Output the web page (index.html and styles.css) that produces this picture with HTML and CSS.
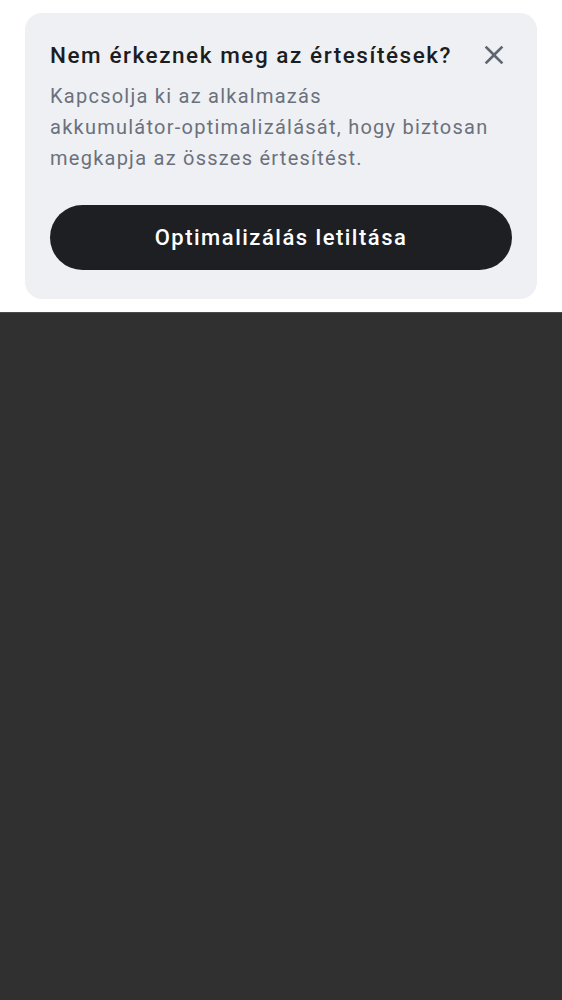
FILE: index.html
```html
<!DOCTYPE html>
<html lang="hu">
<head>
<meta charset="utf-8">
<title>Értesítések</title>
<link rel="stylesheet" href="styles.css">
</head>
<body>
<div class="top">
  <div class="card">
    <div class="card-head">
      <h1 class="card-title">Nem érkeznek meg az értesítések?</h1>
      <button class="close" aria-label="Bezárás">
        <svg viewBox="0 0 24 24" width="32" height="32"><path fill="currentColor" d="M19 6.41L17.59 5 12 10.59 6.41 5 5 6.41 10.59 12 5 17.59 6.41 19 12 13.41 17.59 19 19 17.59 13.41 12z"/></svg>
      </button>
    </div>
    <p class="card-text">Kapcsolja ki az alkalmazás<br>akkumulátor-optimalizálását, hogy biztosan megkapja az összes értesítést.</p>
    <button class="primary">Optimalizálás letiltása</button>
  </div>
</div>
<div class="dark"></div>
</body>
</html>
```
FILE: styles.css
```css
html, body {
  margin: 0;
  padding: 0;
  height: 100%;
}
body {
  font-family: Roboto, "Noto Sans", sans-serif;
  background: #303030;
  display: flex;
  flex-direction: column;
}
.top {
  background: #ffffff;
  padding: 13px 25px 0 25px;
  height: 299px;
}
.card {
  background: #eff0f4;
  border-radius: 17px;
  padding: 27px 25px 29px 25px;
  height: 286px;
  box-sizing: border-box;
  display: flex;
  flex-direction: column;
}
.card-head {
  display: flex;
  align-items: center;
  justify-content: space-between;
  height: 30px;
}
.card-title {
  margin: 0;
  font-size: 22.5px;
  line-height: 30px;
  font-weight: 500;
  color: #1c1d21;
  letter-spacing: 1.55px;
  white-space: nowrap;
}
.close {
  border: 0;
  background: none;
  padding: 0;
  margin-right: 2px;
  width: 32px;
  height: 32px;
  color: #5f6670;
  display: flex;
  flex-shrink: 0;
}
.card-text {
  margin: 11px 0 0 0;
  font-size: 20px;
  line-height: 31px;
  color: #6b717c;
  letter-spacing: 1.25px;
}
.primary {
  margin-top: auto;
  height: 65px;
  border: 0;
  border-radius: 33px;
  background: #1e1f23;
  color: #ffffff;
  font-family: Roboto, "Noto Sans", sans-serif;
  font-size: 22px;
  font-weight: 500;
  letter-spacing: 1.5px;
}
.dark {
  flex: 1;
  background: #303030;
  border-top: 1px solid #4a4a4a;
}
```
